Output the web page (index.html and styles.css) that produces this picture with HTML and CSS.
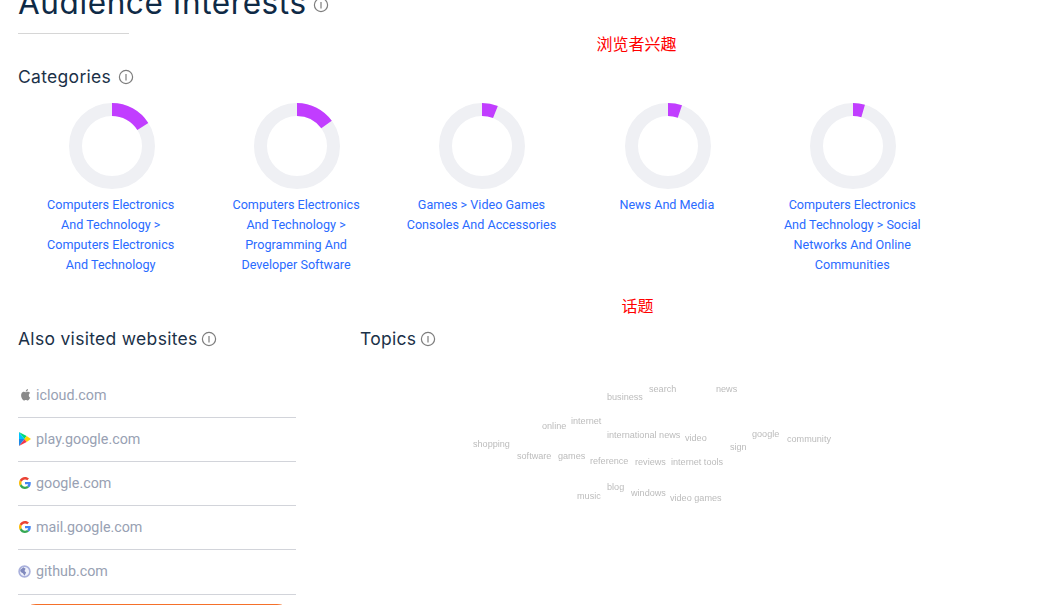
FILE: index.html
```html
<!DOCTYPE html>
<html>
  <head>
    <meta charset="utf-8">
    <meta name="viewport" content="width=device-width, initial-scale=1">
    <title>Audience Interests</title>
    <link rel="stylesheet" href="styles.css">
  </head>
  <body>
    <main>
      <h1 class="title">Audience Interests
        <svg class="info info_title" viewBox="0 0 16 16"><use href="#info"/></svg>
      </h1>
      <div class="divider"></div>
      <p class="note note_first">浏览者兴趣</p>

      <h2 class="heading heading_wide">Categories
        <svg class="info" viewBox="0 0 16 16"><use href="#info"/></svg>
      </h2>
      <div class="categories">
        <div class="category">
          <svg class="donut" viewBox="0 0 86 86">
            <circle class="donut_track" cx="43" cy="43" r="36.5"/>
            <circle class="donut_value" cx="43" cy="43" r="36.5" pathLength="100" stroke-dasharray="16 100"/>
          </svg>
          <a href="#">Computers Electronics And Technology &gt; Computers Electronics And Technology</a>
        </div>
        <div class="category">
          <svg class="donut" viewBox="0 0 86 86">
            <circle class="donut_track" cx="43" cy="43" r="36.5"/>
            <circle class="donut_value" cx="43" cy="43" r="36.5" pathLength="100" stroke-dasharray="15 100"/>
          </svg>
          <a href="#">Computers Electronics And Technology &gt; Programming And Developer Software</a>
        </div>
        <div class="category">
          <svg class="donut" viewBox="0 0 86 86">
            <circle class="donut_track" cx="43" cy="43" r="36.5"/>
            <circle class="donut_value" cx="43" cy="43" r="36.5" pathLength="100" stroke-dasharray="6 100"/>
          </svg>
          <a href="#">Games &gt; Video Games Consoles And Accessories</a>
        </div>
        <div class="category">
          <svg class="donut" viewBox="0 0 86 86">
            <circle class="donut_track" cx="43" cy="43" r="36.5"/>
            <circle class="donut_value" cx="43" cy="43" r="36.5" pathLength="100" stroke-dasharray="5.3 100"/>
          </svg>
          <a href="#">News And Media</a>
        </div>
        <div class="category">
          <svg class="donut" viewBox="0 0 86 86">
            <circle class="donut_track" cx="43" cy="43" r="36.5"/>
            <circle class="donut_value" cx="43" cy="43" r="36.5" pathLength="100" stroke-dasharray="4.5 100"/>
          </svg>
          <a href="#">Computers Electronics And Technology &gt; Social Networks And Online Communities</a>
        </div>
      </div>

      <p class="note note_second">话题</p>

      <div class="columns">
        <section class="visited">
          <h2 class="heading">Also visited websites
            <svg class="info" viewBox="0 0 16 16"><use href="#info"/></svg>
          </h2>
          <ul class="sites">
            <li>
              <svg class="site_icon" viewBox="3 2 18 21"><path fill="#8a8a8a" d="M18.7 12.6c0-2.5 2-3.7 2.1-3.8-1.2-1.700-3-1.900-3.600-1.900-1.500-.2-3 .9-3.800.9s-2-.9-3.300-.9c-1.700 0-3.300 1-4.100 2.500-1.800 3.100-.5 7.600 1.200 10.100.8 1.200 1.800 2.600 3.100 2.500 1.300 0 1.700-.8 3.200-.8s1.900.8 3.200.8 2.200-1.200 3-2.400c1-1.400 1.300-2.700 1.400-2.800-.1 0-2.400-.9-2.400-3.200zM16.200 5.200c.7-.8 1.100-1.900 1-3.100-1 0-2.200.7-2.900 1.500-.6.7-1.200 1.900-1 3 1.100.1 2.200-.6 2.900-1.400z"/></svg>
              icloud.com
            </li>
            <li>
              <svg class="site_icon site_play" viewBox="2 0 22 24" preserveAspectRatio="none">
                <path fill="#00c3ff" d="M2 0v12h10z"/>
                <path fill="#00d97a" d="M2 0l10 12 4-5z"/>
                <path fill="#ffd400" d="M16 7l-4 5 4 5 8-5z"/>
                <path fill="#f5364b" d="M2 24l14-7-4-5z"/>
                <path fill="#1e88e5" d="M2 12v12l10-12z"/>
              </svg>
              play.google.com
            </li>
            <li>
              <svg class="site_icon" viewBox="0 0 48 48"><use href="#google"/></svg>
              google.com
            </li>
            <li>
              <svg class="site_icon" viewBox="0 0 48 48"><use href="#google"/></svg>
              mail.google.com
            </li>
            <li class="site_last">
              <svg class="site_icon site_globe" viewBox="0 0 24 24">
                <circle cx="12" cy="12" r="10" fill="#eef0fa" stroke="#a9b0dc" stroke-width="3"/>
                <path fill="#8089bd" d="M4 9l6-5 4 3-2 4 3 3-3 6-3-5-4-2z"/>
              </svg>
              github.com
            </li>
          </ul>
          <div class="more"></div>
        </section>
        <section class="topics">
          <h2 class="heading">Topics
            <svg class="info" viewBox="0 0 16 16"><use href="#info"/></svg>
          </h2>
          <div class="cloud">
            <span style="left:247px;top:41px">business</span>
            <span style="left:289px;top:33px">search</span>
            <span style="left:356px;top:33px">news</span>
            <span style="left:182px;top:70px">online</span>
            <span style="left:211px;top:65px">internet</span>
            <span style="left:247px;top:79px">international news</span>
            <span style="left:325px;top:82px">video</span>
            <span style="left:392px;top:78px">google</span>
            <span style="left:370px;top:91px">sign</span>
            <span style="left:427px;top:83px">community</span>
            <span style="left:113px;top:88px">shopping</span>
            <span style="left:157px;top:100px">software</span>
            <span style="left:198px;top:100px">games</span>
            <span style="left:230px;top:105px">reference</span>
            <span style="left:275px;top:106px">reviews</span>
            <span style="left:311px;top:106px">internet tools</span>
            <span style="left:247px;top:131px">blog</span>
            <span style="left:271px;top:137px">windows</span>
            <span style="left:217px;top:140px">music</span>
            <span style="left:310px;top:142px">video games</span>
          </div>
        </section>
      </div>
    </main>

    <svg class="defs" width="0" height="0">
      <symbol id="info" viewBox="0 0 16 16">
        <circle cx="8" cy="8" r="6.600" fill="none" stroke="#7d7d7d" stroke-width="1.200"/>
        <path d="M8 5v6.400" stroke="#7d7d7d" stroke-width="1.200"/>
      </symbol>
      <symbol id="google" viewBox="0 0 48 48">
        <path fill="#ea4335" d="M24 9.500c3.500 0 6.700 1.300 9.100 3.500l6.800-6.800C35.800 2.400 30.300 0 24 0 14.600 0 6.500 5.400 2.600 13.200l7.900 6.100C12.400 13.700 17.700 9.500 24 9.500z"/>
        <path fill="#4285f4" d="M47 24.500c0-1.600-.1-3.100-.4-4.500H24v9h13c-.6 3-2.200 5.500-4.800 7.200l7.700 6c4.500-4.200 7.100-10.300 7.100-17.700z"/>
        <path fill="#fbbc05" d="M10.500 28.700c-.5-1.500-.8-3-.8-4.700s.3-3.200.8-4.700l-7.900-6.100C.9 16.500 0 20.100 0 24s.9 7.500 2.600 10.800z"/>
        <path fill="#34a853" d="M24 48c6.500 0 11.900-2.100 15.900-5.800l-7.700-6c-2.200 1.400-4.900 2.300-8.200 2.300-6.300 0-11.600-4.200-13.500-9.800l-7.900 6.100C6.500 42.600 14.600 48 24 48z"/>
      </symbol>
    </svg>
  </body>
</html>
```

FILE: styles.css
```css
html, body {
  height: 100%;
  margin: 0;
  overflow: hidden;
}

body {
  background-color: #fff;
  font-family: Roboto, sans-serif;
}

main {
  padding-left: 18px;
  margin-top: -17px;
}

.defs {
  position: absolute;
}

.title {
  margin: 0;
  font-family: Inter, sans-serif;
  font-size: 31.500px;
  letter-spacing: 0.6px;
  line-height: 40px;
  font-weight: 400;
  color: #0f2a46;
}

.divider {
  width: 111px;
  height: 1px;
  margin-top: 10px;
  background-color: #d6d6d6;
}

.note {
  margin: 0;
  font-family: "Noto Sans CJK SC", sans-serif;
  font-size: 16px;
  line-height: 20px;
  color: #f00;
}

.note_first {
  margin: -1px 0 0 578.500px;
}

.note_second {
  margin: 20px 0 0 603.500px;
}

.heading {
  margin: 0;
  font-family: Inter, sans-serif;
  font-size: 17.500px;
  letter-spacing: 0.3px;
  line-height: 24px;
  font-weight: 400;
  color: #1b3148;
}

.heading_wide {
  margin-top: 12px;
}

.info {
  width: 16px;
  height: 16px;
  margin-left: -2px;
  vertical-align: -2px;
}

.info_title {
  margin-left: -3px;
  vertical-align: 1px;
}

.heading_wide .info {
  margin-left: 2px;
}

.categories {
  display: grid;
  grid-template-columns: repeat(5, 185.400px);
  margin-top: 14px;
}

.category {
  display: flex;
  flex-direction: column;
  align-items: center;
  text-align: center;
  font-size: 12.600px;
  line-height: 20px;
}

.category a {
  width: 151.500px;
  margin-top: 6px;
  color: #2a6bff;
  text-decoration: none;
}

.donut {
  width: 86px;
  height: 86px;
  margin-left: 2px;
  transform: rotate(-90deg);
}

.donut_track,
.donut_value {
  fill: none;
  stroke-width: 13;
}

.donut_track {
  stroke: #eff0f4;
}

.donut_value {
  stroke: #c13dff;
}

.columns {
  display: flex;
  margin-top: 12px;
}

.visited {
  width: 278px;
  margin-right: 65px;
}

.topics {
  margin-left: -1px;
}

.sites {
  list-style: none;
  margin: 23px 0 0;
  padding: 0;
}

.sites li {
  display: flex;
  align-items: center;
  gap: 5px;
  height: 42px;
  padding-bottom: 1px;
  border-bottom: 1px solid #d2d4da;
  font-size: 14.300px;
  color: #98a1b3;
}

.sites .site_last {
  padding-bottom: 2px;
}

.site_icon {
  width: 12px;
  height: 12px;
  margin-left: 1px;
  flex-shrink: 0;
}

.site_play {
  height: 14px;
}

.site_globe {
  width: 13px;
  height: 13px;
  margin-left: 0;
}

.more {
  height: 40px;
  margin: 9px 13px 0 12px;
  background-color: #f5702a;
  border-radius: 6px 6px 0 0 / 2px 2px 0 0;
}

.topics {
  flex: 1;
}

.cloud {
  position: relative;
  height: 200px;
}

.cloud span {
  position: absolute;
  font-family: "Liberation Sans", sans-serif;
  font-size: 9.100px;
  line-height: 11px;
  color: #bcbcbc;
  white-space: nowrap;
  filter: blur(0.5px);
}
```
